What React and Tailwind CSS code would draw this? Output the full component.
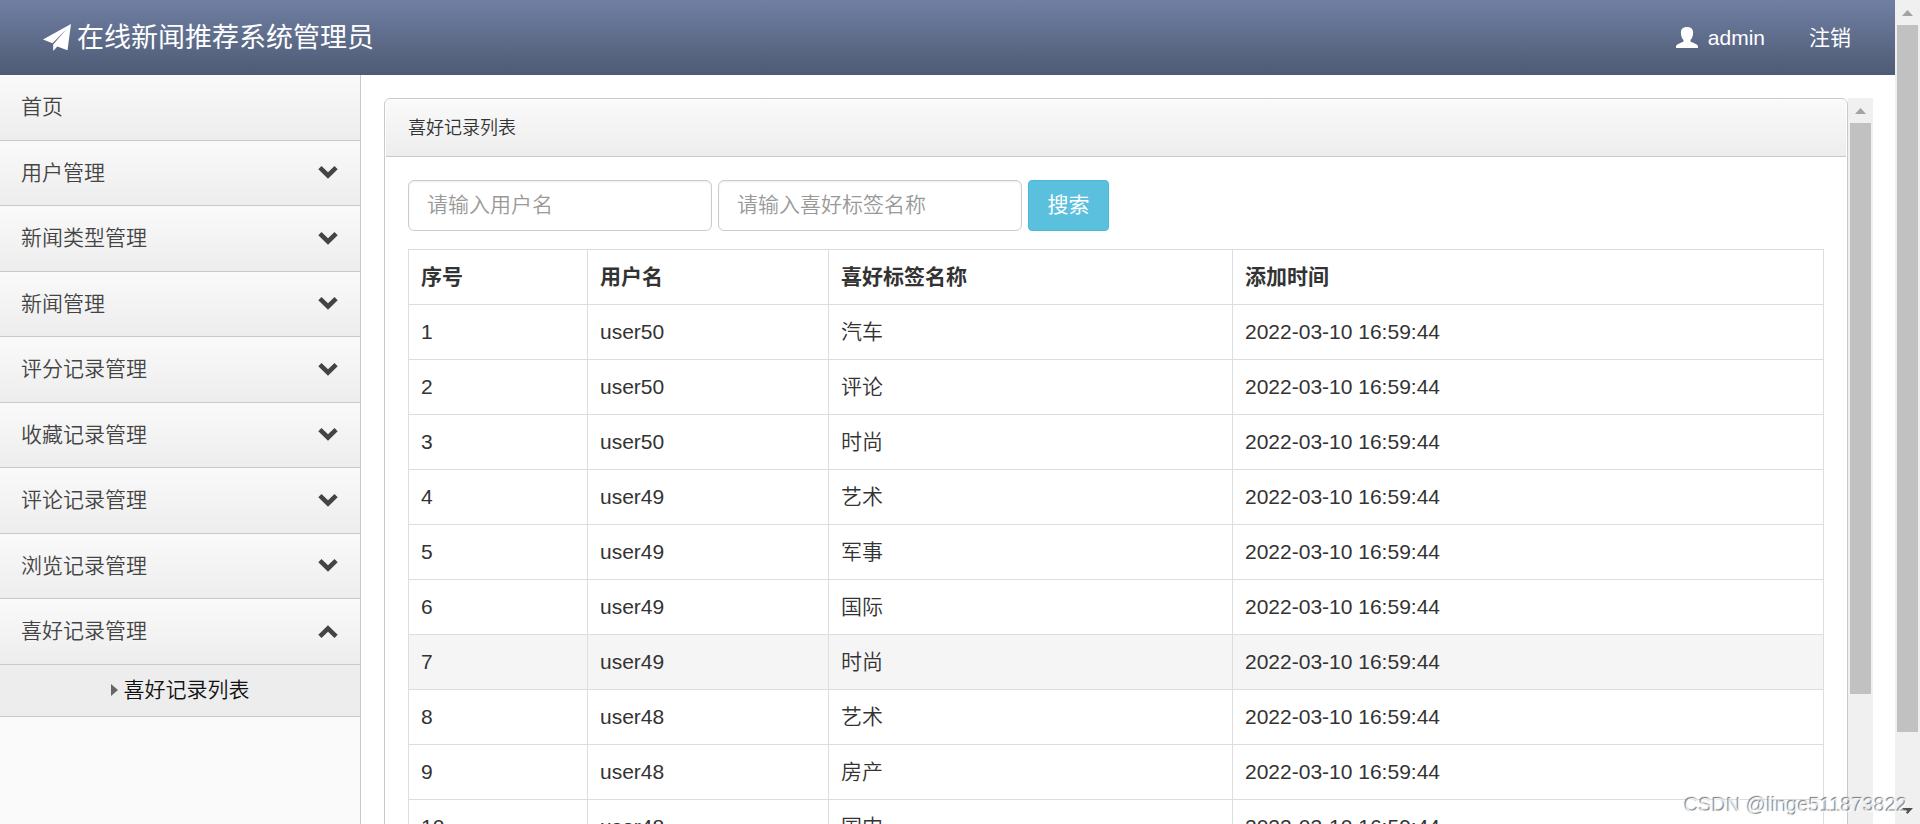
import React, { useState } from 'react';

const menus = [
    { name: '首页' },
    { name: '用户管理', children: [] },
    { name: '新闻类型管理', children: [] },
    { name: '新闻管理', children: [] },
    { name: '评分记录管理', children: [] },
    { name: '收藏记录管理', children: [] },
    { name: '评论记录管理', children: [] },
    { name: '浏览记录管理', children: [] },
    { name: '喜好记录管理', children: ['喜好记录列表'] },
];

const records = [
    { id: 1, user: 'user50', tag: '汽车' },
    { id: 2, user: 'user50', tag: '评论' },
    { id: 3, user: 'user50', tag: '时尚' },
    { id: 4, user: 'user49', tag: '艺术' },
    { id: 5, user: 'user49', tag: '军事' },
    { id: 6, user: 'user49', tag: '国际' },
    { id: 7, user: 'user49', tag: '时尚' },
    { id: 8, user: 'user48', tag: '艺术' },
    { id: 9, user: 'user48', tag: '房产' },
    { id: 10, user: 'user48', tag: '国内' },
];

const SendIcon = () => (
    <svg viewBox="0 0 28 27" className="h-[27px] w-7 fill-white" aria-hidden="true">
        <path d="M28 0 L0 15.600 L9.500 19.300 L24.500 4 L10.200 20.500 V27 L14.300 22.600 L24.500 26.200 Z" />
    </svg>
);

const UserIcon = () => (
    <svg viewBox="0 0 22 21" className="h-[21px] w-[22px] fill-white" aria-hidden="true">
        <path d="M11 0 C7 0 4.900 2.200 4.900 5.500 C4.900 9 6 11.500 7.500 13 V14.500 C6.500 15.500 0 17 0 19.500 V21 H22 V19.500 C22 17 15.500 15.500 14.500 14.500 V13 C16 11.500 17.100 9 17.100 5.500 C17.100 2.200 15 0 11 0 Z" />
    </svg>
);

const Chevron = ({ up }) => (
    <svg viewBox="0 0 20 13" className={`h-[13px] w-5 fill-[#444] ${up ? 'rotate-180' : ''}`} aria-hidden="true">
        <path d="M3.500 0 L10 6.300 L16.500 0 L19.700 3.200 L10 12.800 L0.300 3.200 Z" />
    </svg>
);

const ScrollBar = ({ thumb, end }) => (
    <div className="flex w-[25px] shrink-0 flex-col items-center bg-[#f0f0f0]" aria-hidden="true">
        <svg viewBox="0 0 25 25" className="size-[25px] shrink-0 fill-[#a3a3a3]">
            <path d="M7 16 L12.500 10 L18 16 Z" />
        </svg>
        <div className={`w-[21px] bg-[#c1c1c1] ${thumb}`} />
        {end && (
            <svg viewBox="0 0 25 25" className="mt-auto size-[25px] shrink-0 fill-[#505050]">
                <path d="M7 9 L12.500 15 L18 9 Z" />
            </svg>
        )}
    </div>
);

const Header = () => (
    <header className="flex h-[75px] shrink-0 items-center justify-between bg-linear-to-b from-[#7080a3] to-[#4e5b75] pr-11 pl-[43px] font-normal text-white">
        <a href="#" className="flex items-center gap-1.5 text-[27px] leading-9">
            <SendIcon />
            在线新闻推荐系统管理员
        </a>
        <nav className="flex items-center gap-11">
            <a href="#" className="flex items-center gap-2.5">
                <UserIcon />
                admin
            </a>
            <a href="#">注销</a>
        </nav>
    </header>
);

const Sidebar = () => {
    const [open, setOpen] = useState('喜好记录管理');

    return (
        <aside className="w-[361px] shrink-0 border-r border-[#c9c9c9] bg-[#fafafa] text-[#444]">
            <ul>
                {menus.map((menu) => (
                    <li key={menu.name} className="group">
                        <button
                            type="button"
                            onClick={() => setOpen(open === menu.name ? '' : menu.name)}
                            className="flex h-[65px] w-full items-center justify-between border-b border-[#c9c9c9] bg-linear-to-b from-[#fafafa] to-[#ededed] pr-[22px] pb-px pl-[21px] group-odd:h-[66px]"
                        >
                            {menu.name}
                            {menu.children && <Chevron up={open === menu.name} />}
                        </button>
                        {open === menu.name && menu.children?.map((child) => (
                            <a
                                key={child}
                                href="#"
                                className="flex h-[52px] items-center justify-center gap-1.5 border-b border-[#c9c9c9] bg-[#ededed] pb-0.5 text-[#111]"
                            >
                                <svg viewBox="0 0 7 12" className="h-3 w-[7px] fill-[#666]" aria-hidden="true">
                                    <path d="M0 0 L7 6 L0 12 Z" />
                                </svg>
                                {child}
                            </a>
                        ))}
                    </li>
                ))}
            </ul>
        </aside>
    );
};

const SearchForm = () => (
    <form className="flex gap-1.5" onSubmit={(e) => e.preventDefault()}>
        <input
            type="text"
            aria-label="用户名"
            placeholder="请输入用户名"
            className="h-[51px] w-[304px] rounded-md border border-[#ccc] px-[18px] pb-0.5 shadow-[inset_0_1px_2px_rgba(0,0,0,0.08)] placeholder:text-[#999]"
        />
        <input
            type="text"
            aria-label="喜好标签名称"
            placeholder="请输入喜好标签名称"
            className="h-[51px] w-[304px] rounded-md border border-[#ccc] px-[18px] pb-0.5 shadow-[inset_0_1px_2px_rgba(0,0,0,0.08)] placeholder:text-[#999]"
        />
        <button type="submit" className="h-[51px] w-[81px] rounded-[4px] border border-[#46b8da] bg-[#5bc0de] pb-0.5 font-normal text-white">
            搜索
        </button>
    </form>
);

const RecordTable = () => (
    <table className="mt-[18px] w-full table-fixed border-collapse text-left [&_td]:border [&_td]:border-[#ddd] [&_td]:p-3 [&_th]:border [&_th]:border-[#ddd] [&_th]:p-3">
        <thead>
            <tr>
                <th className="w-[179px]">序号</th>
                <th className="w-[241px]">用户名</th>
                <th className="w-[404px]">喜好标签名称</th>
                <th>添加时间</th>
            </tr>
        </thead>
        <tbody>
            {records.map((record) => (
                <tr key={record.id} className={record.id === 7 ? 'bg-[#f5f5f5]' : 'hover:bg-[#f5f5f5]'}>
                    <td>{record.id}</td>
                    <td>{record.user}</td>
                    <td>{record.tag}</td>
                    <td>2022-03-10 16:59:44</td>
                </tr>
            ))}
        </tbody>
    </table>
);

const App = () => {
    return (
        <div className="relative flex h-screen overflow-hidden bg-white font-['Liberation_Sans','Noto_Sans_CJK_SC',sans-serif] text-[21px] leading-[30px] font-[350] text-[#333]">
            <div className="flex min-w-0 flex-1 flex-col">
                <Header />
                <div className="flex min-h-0 flex-1">
                    <Sidebar />
                    <main className="flex min-w-0 flex-1 pt-[23px] pr-[22px] pl-[23px]">
                        <div className="min-w-0 flex-1 overflow-hidden">
                            <section className="rounded-md border border-[#c9c9c9]">
                                <h1 className="mx-px mt-px border-b border-[#c9c9c9] bg-linear-to-b from-[#fafafa] to-[#ededed] px-[22px] py-[13px] text-[18px]">
                                    喜好记录列表
                                </h1>
                                <div className="p-[23px]">
                                    <SearchForm />
                                    <RecordTable />
                                </div>
                            </section>
                        </div>
                        <ScrollBar thumb="h-[571px]" />
                    </main>
                </div>
            </div>
            <ScrollBar thumb="h-[707px]" end />
            <div className="absolute right-3 bottom-1 text-[20px] text-white/80 [text-shadow:-1px_-1px_1px_#777]">
                CSDN @linge511873822
            </div>
        </div>
    );
};

export default App;
